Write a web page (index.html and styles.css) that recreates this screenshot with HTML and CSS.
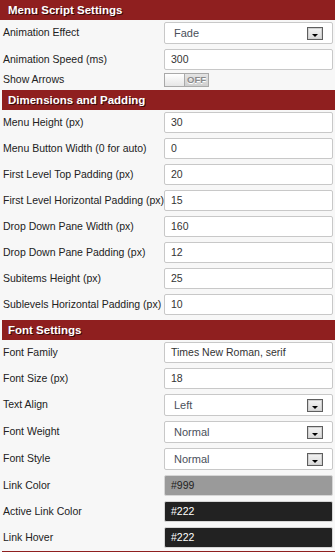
FILE: index.html
```html
<!DOCTYPE html>
<html>
<head>
<meta charset="utf-8">
<link rel="stylesheet" href="styles.css">
</head>
<body>
<div class="panel">
  <div class="hdr first">Menu Script Settings</div>
  <div class="row sel"><label>Animation Effect</label><div class="select"><span>Fade</span><i class="arrow"></i></div></div>
  <div class="row"><label>Animation Speed (ms)</label><div class="input">300</div></div>
  <div class="row tog"><label>Show Arrows</label><div class="toggle"><span class="knob"></span><span class="off">OFF</span></div></div>

  <div class="hdr">Dimensions and Padding</div>
  <div class="row"><label>Menu Height (px)</label><div class="input">30</div></div>
  <div class="row"><label>Menu Button Width (0 for auto)</label><div class="input">0</div></div>
  <div class="row"><label>First Level Top Padding (px)</label><div class="input">20</div></div>
  <div class="row"><label>First Level Horizontal Padding (px)</label><div class="input">15</div></div>
  <div class="row"><label>Drop Down Pane Width (px)</label><div class="input">160</div></div>
  <div class="row"><label>Drop Down Pane Padding (px)</label><div class="input">12</div></div>
  <div class="row"><label>Subitems Height (px)</label><div class="input">25</div></div>
  <div class="row"><label>Sublevels Horizontal Padding (px)</label><div class="input">10</div></div>

  <div class="hdr third">Font Settings</div>
  <div class="row"><label>Font Family</label><div class="input">Times New Roman, serif</div></div>
  <div class="row"><label>Font Size (px)</label><div class="input">18</div></div>
  <div class="row sel"><label>Text Align</label><div class="select"><span>Left</span><i class="arrow"></i></div></div>
  <div class="row sel"><label>Font Weight</label><div class="select"><span>Normal</span><i class="arrow"></i></div></div>
  <div class="row sel"><label>Font Style</label><div class="select"><span>Normal</span><i class="arrow"></i></div></div>
  <div class="row"><label>Link Color</label><div class="input color gray">#999</div></div>
  <div class="row"><label>Active Link Color</label><div class="input color dark">#222</div></div>
  <div class="row"><label>Link Hover</label><div class="input color dark">#222</div></div>

  <div class="hdr"></div>
</div>
</body>
</html>
```
FILE: styles.css
```css
html, body {
  margin: 0;
  padding: 0;
  background: #f7f7f7;
}
body {
  width: 335px;
  height: 552px;
  overflow: hidden;
  font-family: "Liberation Sans", Arial, sans-serif;
}
.panel {
  display: flex;
  flex-direction: column;
}
.hdr {
  flex: none;
  height: 20px;
  line-height: 20px;
  margin-left: 2px;
  padding-left: 6px;
  background: #8f1f1f;
  color: #fff;
  font-weight: bold;
  font-size: 11.5px;
  text-shadow: 1px 1px 0 #3a0a0a;
}
.hdr.first {
  margin-left: 0;
  padding-left: 8px;
}
.hdr.third {
  margin-top: 2px;
}
.row {
  display: flex;
  align-items: center;
  padding: 2px 0 3px 3px;
}
.row label {
  width: 161px;
  flex: none;
  font-size: 10.5px;
  color: #222;
  white-space: nowrap;
  margin-top: -2px;
}
.input {
  box-sizing: border-box;
  width: 169px;
  height: 21px;
  border: 1px solid #c8c8c8;
  border-radius: 2px;
  background: #fff;
  font-size: 10.5px;
  color: #333;
  line-height: 19px;
  padding-left: 6px;
}
.input.gray {
  background: #9a9a9a;
  color: #222;
  border-color: #d6d6d6;
}
.input.dark {
  background: #222;
  color: #fff;
  border-color: #d6d6d6;
}
.select {
  box-sizing: border-box;
  width: 169px;
  height: 22px;
  border: 1px solid #c8c8c8;
  border-radius: 2px;
  background: #fff;
  display: flex;
  align-items: center;
  justify-content: space-between;
  padding: 0 9px 0 9px;
  font-size: 11px;
  color: #4a4f5a;
}
.arrow {
  box-sizing: border-box;
  width: 16px;
  height: 13px;
  border: 1px solid #5e5e5e;
  outline: 1px solid #d0d0d0;
  outline-offset: -2px;
  background: linear-gradient(#f4f4f4, #d8d8d8);
  display: flex;
  align-items: flex-end;
  justify-content: center;
  padding-bottom: 2px;
}
.arrow::after {
  content: "";
  border-left: 3px solid transparent;
  border-right: 3px solid transparent;
  border-top: 3px solid #000;
}
.row.tog {
  padding: 0 0 3px 3px;
}
.toggle {
  box-sizing: border-box;
  width: 45px;
  height: 14px;
  border: 1px solid #a9a9a9;
  display: flex;
  background: linear-gradient(#e4e4e4, #cfcfcf);
}
.knob {
  width: 19px;
  background: linear-gradient(#ffffff, #e6e6e6);
  border-right: 1px solid #a9a9a9;
}
.off {
  flex: 1;
  font-size: 9.5px;
  font-weight: bold;
  color: #8a8a8a;
  text-align: center;
  line-height: 12px;
  text-shadow: 0 1px 0 #fff;
}
```
